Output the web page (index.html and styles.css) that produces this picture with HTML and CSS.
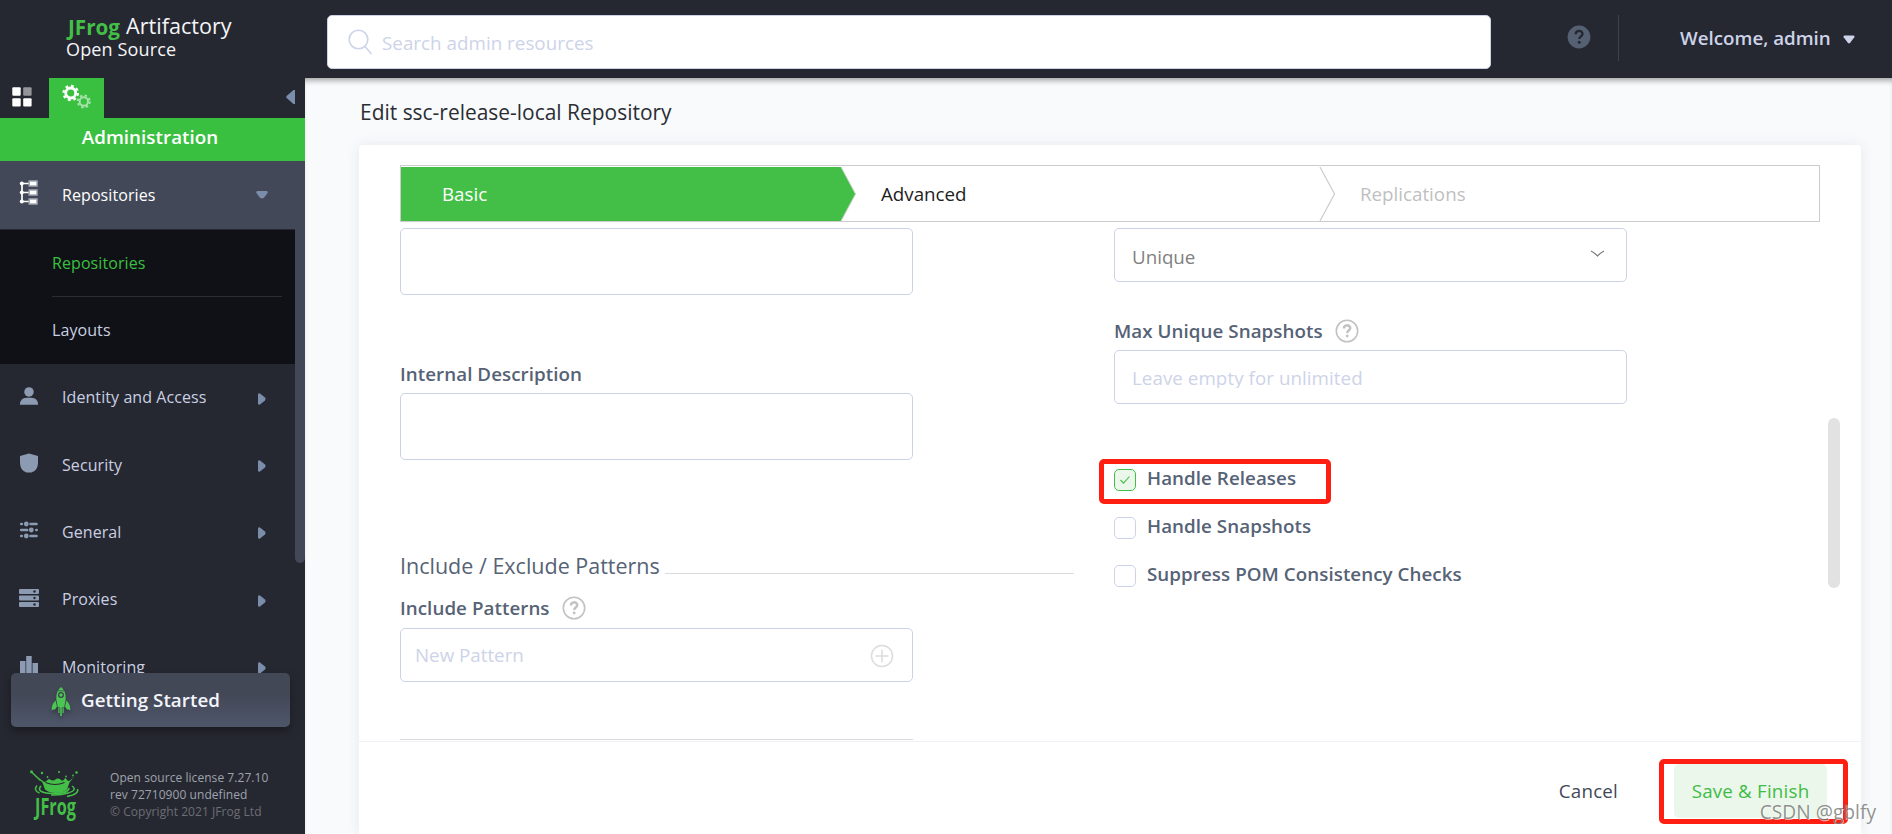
FILE: index.html
```html
<!DOCTYPE html>
<html lang="en">
<head>
    <meta charset="UTF-8">
    <meta name="viewport" content="width=device-width, initial-scale=1.0">
    <title>JFrog Artifactory</title>
    <link rel="stylesheet" href="styles.css">
</head>
<body>

    <header class="topbar">
        <div class="brand">
            <div class="brand-name">
                <svg width="54" height="26" viewBox="0 0 54 26"><text class="frog-text" x="0" y="21.5" font-size="22" textLength="52" lengthAdjust="spacingAndGlyphs">JFrog</text></svg>
                <span>Artifactory</span>
            </div>
            <div class="brand-edition">Open Source</div>
        </div>
        <div class="search">
            <svg width="26" height="26" viewBox="0 0 26 26" fill="none" stroke="#cdd3e8" stroke-width="1.6"><circle cx="10.5" cy="10.5" r="9.3"/><path d="M17 17.5l6.5 7.5"/></svg>
            <span>Search admin resources</span>
        </div>
        <svg class="top-help" width="24" height="24" viewBox="0 0 24 24"><circle cx="12" cy="12" r="11.4" fill="#556173"/><path d="M8.7 9.3c0-4.6 6.8-4.4 6.8-.4 0 2.5-3.2 2.5-3.2 5" fill="none" stroke="#262831" stroke-width="2.4"/><circle cx="12.2" cy="17.2" r="1.5" fill="#262831"/></svg>
        <div class="user">
            <span>Welcome, admin</span>
            <svg width="12" height="9" viewBox="0 0 12 9"><path d="M1.5.5h9q1.5.3.8 1.8L7.2 7.8q-1.2 1.2-2.4 0L.7 2.3Q0 .8 1.5.5z" fill="#cdd3e8"/></svg>
        </div>
    </header>

    <aside class="sidebar">
        <div class="modes">
            <div class="mode">
                <svg width="20" height="20" viewBox="0 0 20 20" fill="#fff"><rect x=".3" y=".3" width="8.4" height="8.4" rx="1"/><rect x="11.2" y=".3" width="8.4" height="8.4" rx="1" fill="#94959b"/><rect x=".3" y="11.2" width="8.4" height="8.4" rx="1"/><rect x="11.2" y="11.2" width="8.4" height="8.4" rx="1"/></svg>
            </div>
            <div class="mode active">
                <svg width="30" height="26" viewBox="0 0 30 26" fill="none">
                    <circle cx="8.7" cy="9" r="5" stroke="#fff" stroke-width="2.8"/>
                    <circle cx="8.7" cy="9" r="7.2" stroke="#fff" stroke-width="2.2" stroke-dasharray="2.83 2.83"/>
                    <g opacity=".55"><circle cx="21.8" cy="17.5" r="4.2" stroke="#fff" stroke-width="2"/>
                    <circle cx="21.8" cy="17.5" r="6" stroke="#fff" stroke-width="2" stroke-dasharray="2.36 2.36"/></g>
                </svg>
            </div>
            <svg class="collapse" width="9" height="14" viewBox="0 0 9 14"><path d="M9 0H7.5L.6 6q-.8 1 0 2l6.9 6H9z" fill="#7a8dab"/></svg>
        </div>
        <div class="mode-title">Administration</div>

        <nav class="menu">
            <div class="menu-item open">
                <svg class="menu-icon" width="20" height="26" viewBox="0 0 20 26"><path d="M3 3.5v19M3 3.5h8M3 12.5h8M3 21.5h8" stroke="#fff" stroke-width="1.7" fill="none"/><g fill="#fff"><circle cx="2.8" cy="3.5" r="2"/><circle cx="2.8" cy="12.5" r="2"/><circle cx="2.8" cy="21.5" r="2"/></g><g fill="#fff" stroke="#a3a8b3" stroke-width="1.5"><rect x="10.2" y="1" width="7.8" height="5"/><rect x="10.2" y="10" width="7.8" height="5"/><rect x="10.2" y="19" width="7.8" height="5"/></g></svg>
                <span>Repositories</span>
                <svg class="arrow" width="12" height="8" viewBox="0 0 12 8"><path d="M1.2 0h9.6q1.5.5.8 2L8 6.8q-2 1.6-4 0L.4 2Q-.3.5 1.2 0z" fill="#7a8dab"/></svg>
            </div>
            <div class="submenu">
                <div class="submenu-item selected">Repositories</div>
                <div class="submenu-item">Layouts</div>
            </div>
            <div class="menu-item">
                <svg class="menu-icon" width="22" height="22" viewBox="0 0 22 22" fill="#8c9bb2"><circle cx="11" cy="6.5" r="5.2"/><path d="M1 20.5q.5-7.5 7-7.5h6q6.5 0 7 7.5z"/></svg>
                <span>Identity and Access</span>
                <svg class="arrow" width="8" height="12" viewBox="0 0 8 12"><path d="M0 1.3Q.6-.3 2 .5l5 4q1.3 1.5 0 3l-5 4Q.6 12.3 0 10.7z" fill="#7a8dab"/></svg>
            </div>
            <div class="menu-item">
                <svg class="menu-icon" width="20" height="22" viewBox="0 0 20 22"><path d="M10 1.5l9 2.5v6.5q0 8-6.5 10h-5Q1 18.5 1 10.5V4z" fill="#8c9bb2"/></svg>
                <span>Security</span>
                <svg class="arrow" width="8" height="12" viewBox="0 0 8 12"><path d="M0 1.3Q.6-.3 2 .5l5 4q1.3 1.5 0 3l-5 4Q.6 12.3 0 10.7z" fill="#7a8dab"/></svg>
            </div>
            <div class="menu-item">
                <svg class="menu-icon" width="20" height="22" viewBox="0 0 20 22"><path d="M2.2 5h.6M11.5 5h6M2.2 11h6M17.3 11h.4M2.2 17h.6M11.5 17h6" stroke="#8c9bb2" stroke-width="2.6" stroke-linecap="round"/><g fill="#8c9bb2"><circle cx="7.3" cy="5" r="2.4"/><circle cx="12.3" cy="11" r="2.4"/><circle cx="7.3" cy="17" r="2.4"/></g></svg>
                <span>General</span>
                <svg class="arrow" width="8" height="12" viewBox="0 0 8 12"><path d="M0 1.3Q.6-.3 2 .5l5 4q1.3 1.5 0 3l-5 4Q.6 12.3 0 10.7z" fill="#7a8dab"/></svg>
            </div>
            <div class="menu-item">
                <svg class="menu-icon" width="20" height="22" viewBox="0 0 20 22"><g fill="#8c9bb2"><rect x="0" y="2" width="20" height="5" rx="1"/><rect x="0" y="8.5" width="20" height="5" rx="1"/><rect x="0" y="15" width="20" height="5" rx="1"/></g><g fill="#262831"><circle cx="15.5" cy="4.5" r="1.2"/><circle cx="15.5" cy="11" r="1.2"/><circle cx="15.5" cy="17.5" r="1.2"/></g></svg>
                <span>Proxies</span>
                <svg class="arrow" width="8" height="12" viewBox="0 0 8 12"><path d="M0 1.3Q.6-.3 2 .5l5 4q1.3 1.5 0 3l-5 4Q.6 12.3 0 10.7z" fill="#7a8dab"/></svg>
            </div>
            <div class="menu-item">
                <svg class="menu-icon" width="20" height="22" viewBox="0 0 20 22" fill="#8c9bb2"><rect x="1" y="7" width="5.5" height="15"/><rect x="7.2" y="2" width="5.5" height="20"/><rect x="13.5" y="9" width="5.5" height="13"/></svg>
                <span>Monitoring</span>
                <svg class="arrow" width="8" height="12" viewBox="0 0 8 12"><path d="M0 1.3Q.6-.3 2 .5l5 4q1.3 1.5 0 3l-5 4Q.6 12.3 0 10.7z" fill="#7a8dab"/></svg>
            </div>
            <div class="menu-scroll"></div>
        </nav>

        <div class="getting-started">
            <svg width="20" height="32" viewBox="0 0 20 32" fill="#4cc653"><path d="M10 1q2 1.5 3 3.5H7q1-2 3-3.5z"/><path fill-rule="evenodd" d="M6.5 5.3h7q1.5 4 1.2 8l-1.5 8.2H6.8L5.3 13.3q-.3-4 1.2-8zM10 6a3 3 0 1 0 0 6 3 3 0 0 0 0-6z"/><circle cx="10" cy="9" r="1.8"/><path d="M4.5 14.5l1.5 6-2 3q-2.5-.5-3.2 1-.8-5 3.7-10zM15.5 14.5l-1.5 6 2 3q2.5-.5 3.2 1 .8-5-3.7-10z"/><path d="M9.2 14h1.6v16H9.2zM7.3 22h1.2v5H7.3zM11.5 22h1.2v5h-1.2z"/></svg>
            <span>Getting Started</span>
        </div>

        <div class="license">
            <svg width="50" height="50" viewBox="0 0 50 50" fill="none" stroke="#43bf47">
                <g fill="#43bf47" stroke="none">
                    <path d="M4 5l9 6q2 2 4-.5 1.500-2.500 3-1 3 2 5.500 0t5.500.5q2 1.500 3-.5 1.500-2.500 3 .5 2 2 4-.5l3-3-4.500 6-2.500 7q-4 3.500-11 3.500t-11-3.500l-2.500-7z"/>
                    <circle cx="1.5" cy="1.8" r="1.5"/><circle cx="12" cy="3" r="1.2"/><circle cx="17.5" cy="7" r=".9"/><circle cx="29" cy="2" r="1"/><circle cx="46.5" cy="2.5" r="1.3"/><circle cx="36" cy="6.5" r=".9"/><circle cx="43" cy="5.5" r=".9"/>
                </g>
                <path d="M1.5 2l9 8.5" stroke-width="1.5"/>
                <path d="M15.5 12.5q9.5 4 19 0" stroke="#262831" stroke-width="1.2"/>
                <path d="M11 16q-6 6.500 11 7.500 16 .5 17-5.500" stroke-width="1.7"/>
                <path d="M7 15.500q-4 5 2.500 7.500M42 16q6 4-4 7-7 2.500-17 2M47.500 19q2 5-10.500 7.500" stroke-width="1.5"/>
                <text class="frog-text" x="5" y="44.5" font-size="23" stroke="none" textLength="41" lengthAdjust="spacingAndGlyphs">JFrog</text>
            </svg>
            <div class="license-text">
                <div>Open source license 7.27.10</div>
                <div>rev 72710900 undefined</div>
                <div class="copyright">© Copyright 2021 JFrog Ltd</div>
            </div>
        </div>
    </aside>

    <main class="content">
        <h1>Edit ssc-release-local Repository</h1>

        <div class="card">
            <div class="wizard">
                <div class="step current">Basic</div>
                <svg class="step-sep" width="17" height="55" viewBox="0 0 17 55"><path d="M0 1h2l14.500 27L2 55H0z" fill="#43bf47"/><path d="M2 1l14.500 27L2 55" fill="none" stroke="#c4cfc4"/></svg>
                <div class="step next">Advanced</div>
                <svg class="step-sep" width="17" height="55" viewBox="0 0 17 55"><path d="M1 1l14.500 27L1 55" fill="none" stroke="#ccc" stroke-width="1.2"/></svg>
                <div class="step disabled">Replications</div>
            </div>

            <div class="form">
                <div class="column">
                    <div class="field area"></div>
                    <div class="label internal"><span>Internal Description</span></div>
                    <div class="field area"></div>
                    <div class="section-title"><span>Include / Exclude Patterns</span></div>
                    <div class="label include"><span>Include Patterns</span>
                        <svg width="24" height="24" viewBox="0 0 24 24" fill="none" stroke="#c2c2c2"><circle cx="12" cy="12" r="10.7" stroke-width="1.6"/><path d="M8.9 9.5c0-4.2 6.3-4 6.3-.4 0 2.4-3 2.4-3 4.9" stroke-width="2.5"/><circle cx="12.2" cy="17" r=".8" stroke-width="1.3"/></svg>
                    </div>
                    <div class="field pattern">
                        <span>New Pattern</span>
                        <svg width="24" height="24" viewBox="0 0 24 24" fill="none" stroke="#dcdcdc" stroke-width="1.5"><circle cx="12" cy="12" r="10.5"/><path d="M12 5.500v13M5.500 12h13"/></svg>
                    </div>
                    <div class="list-top"></div>
                </div>

                <div class="column">
                    <div class="field select">
                        <span>Unique</span>
                        <svg width="15" height="8" viewBox="0 0 15 8"><path d="M1 1q3 1.500 6.500 5Q11 2.500 14 1" fill="none" stroke="#777" stroke-width="1.1"/></svg>
                    </div>
                    <div class="label max"><span>Max Unique Snapshots</span>
                        <svg width="24" height="24" viewBox="0 0 24 24" fill="none" stroke="#c2c2c2"><circle cx="12" cy="12" r="10.7" stroke-width="1.6"/><path d="M8.9 9.5c0-4.2 6.3-4 6.3-.4 0 2.4-3 2.4-3 4.9" stroke-width="2.5"/><circle cx="12.2" cy="17" r=".8" stroke-width="1.3"/></svg>
                    </div>
                    <div class="field number"><span>Leave empty for unlimited</span></div>
                    <div class="checks">
                        <div class="check">
                            <span class="box checked"><svg width="12" height="10" viewBox="0 0 12 10"><path d="M1.5 5l3 3.200L10.500 1.500" fill="none" stroke="#43bf47" stroke-width="1.1"/></svg></span>
                            <span class="check-label">Handle Releases</span>
                            <div class="marker marker-check"></div>
                        </div>
                        <div class="check"><span class="box"></span><span class="check-label">Handle Snapshots</span></div>
                        <div class="check"><span class="box"></span><span class="check-label">Suppress POM Consistency Checks</span></div>
                    </div>
                </div>
                <div class="form-scroll"></div>
            </div>

            <div class="actions">
                <span class="cancel">Cancel</span>
                <div class="save">Save &amp; Finish
                    <div class="marker marker-save"></div>
                </div>
            </div>
        </div>
    </main>

    <div class="watermark">CSDN @gblfy</div>

</body>
</html>
```

FILE: styles.css
```css
:root {
    --dark: #262831;
    --slate: #424857;
    --green: #43bf47;
    --border: #cbd2e6;
    --label: #566275;
    --placeholder: #cdd3e8;
    --red: #ff1f12;
}

* {
    margin: 0;
    padding: 0;
    box-sizing: border-box;
}

body {
    position: relative;
    display: grid;
    grid-template: 78px 756px / 305px 1fr;
    width: 1892px;
    height: 834px;
    overflow: hidden;
    font-family: "Open Sans", "Noto Sans", sans-serif;
    font-size: 18.75px;
    background: #f8fafc;
}

svg {
    display: block;
    flex-shrink: 0;
    overflow: visible;
}

/* Top bar */
.topbar {
    grid-column: 1 / 3;
    display: flex;
    align-items: flex-start;
    background: var(--dark);
    color: #f4f5f8;
}

.brand {
    width: 327px;
    padding: 13px 0 0 66px;
}

.brand-name {
    display: flex;
    gap: 4px;
    height: 26px;
    padding-left: 2px;
    font-size: 21.6px;
    line-height: 26px;
}

.brand-edition {
    font-size: 18px;
    letter-spacing: 0.15px;
    line-height: 20px;
}

.frog-text {
    fill: var(--green);
    font-family: "Open Sans", sans-serif;
    font-weight: 700;
}

.search {
    display: flex;
    gap: 8px;
    width: 1164px;
    height: 54px;
    margin-top: 15px;
    padding: 13px 20px;
    border: 1px solid var(--border);
    border-radius: 5px;
    background: #fff;
    color: var(--placeholder);
    letter-spacing: 0.04px;
    line-height: 27px;
}

.top-help {
    margin: 25px 0 0 76px;
}

.user {
    display: flex;
    align-items: center;
    gap: 12px;
    height: 46px;
    margin: 15px 0 0 27px;
    padding: 0 0 0 61px;
    border-left: 1px solid #3d414d;
    color: var(--placeholder);
    font-weight: 600;
}

.user span {
    margin-top: -2px;
}

.user svg {
    margin-top: 3px;
}

/* Sidebar */
.sidebar {
    display: flex;
    flex-direction: column;
    background: var(--dark);
}

.modes {
    display: flex;
    height: 40px;
}

.mode {
    width: 49px;
    padding: 9px 0 0 12px;
}

.mode.active {
    width: 55px;
    padding: 6px 0 0 13px;
    background: #3ac040;
}

.collapse {
    margin: 12px 10px 0 auto;
}

.mode-title {
    height: 43px;
    padding-right: 5px;
    background: #3ac040;
    color: #fff;
    font-weight: 600;
    letter-spacing: 0.05px;
    line-height: 37px;
    text-align: center;
}

.menu {
    position: relative;
    height: 512px;
    overflow: hidden;
    color: #c9cfe2;
    font-size: 16px;
    letter-spacing: 0.08px;
}

.menu-item {
    display: flex;
    align-items: center;
    height: 67.4px;
    padding: 0 29px 0 19px;
}

.menu-item .menu-icon {
    width: 20px;
    margin: -4px 23px 0 0;
}

.menu-item span {
    margin-top: -1px;
}

.menu-item .arrow {
    margin: 2px 10px 0 auto;
}

.menu-item.open {
    height: 68px;
    padding-right: 27px;
    background: var(--slate);
    color: #fff;
}

.menu-item.open span {
    margin-top: 0;
}

.menu-item.open .arrow {
    margin: 0 10px 0 auto;
}

.submenu {
    height: 135px;
    margin-right: 10px;
    padding: 0 13px 0 52px;
    border-top: 1px solid var(--dark);
    background: #101116;
}

.submenu-item {
    height: 67px;
    line-height: 67px;
}

.submenu-item.selected {
    border-bottom: 1px solid #2b2d36;
    color: #3ac040;
}

.menu-scroll {
    position: absolute;
    top: 0;
    right: 0;
    width: 10px;
    height: 402px;
    border-radius: 5px;
    background: var(--slate);
}

.getting-started {
    display: flex;
    align-items: center;
    gap: 10px;
    width: 279px;
    height: 54px;
    margin-left: 11px;
    padding-left: 40px;
    border-radius: 5px;
    background: linear-gradient(#434857 40%, #4e566a);
    box-shadow: 0 4px 8px rgba(0, 0, 0, 0.35);
    color: #f3f5fb;
    font-weight: 600;
    letter-spacing: 0.05px;
}

.getting-started span {
    margin-top: -2px;
}

.getting-started svg {
    margin-top: 4px;
    filter: drop-shadow(0 3px 2px rgba(0, 0, 0, 0.3));
}

.license {
    display: flex;
    gap: 30px;
    margin-top: 43px;
    padding-left: 30px;
}

.license-text {
    margin-top: -1px;
    color: #9fa3ad;
    font-size: 12px;
    letter-spacing: 0.06px;
    line-height: 17px;
    white-space: nowrap;
}

.copyright {
    color: #6c6e75;
}

/* Content */
.content {
    padding: 0 31px 0 54px;
    box-shadow: inset 0 6px 6px -4px rgba(0, 0, 0, 0.4);
}

h1 {
    height: 67px;
    padding-left: 1px;
    color: #2b2d33;
    font-size: 20.95px;
    font-weight: 400;
    line-height: 69px;
}

.card {
    height: 689px;
    padding-top: 20px;
    border-radius: 4px 4px 0 0;
    background: #fff;
    box-shadow: 0 0 14px rgba(60, 70, 80, 0.09);
}

.wizard {
    display: flex;
    width: 1420px;
    height: 57px;
    margin-left: 41px;
    border: 1px solid #ccc;
    line-height: 56px;
}

.step.current {
    width: 438px;
    margin-top: 1px;
    padding-left: 41px;
    background: var(--green);
    color: #fff;
    font-weight: 500;
    line-height: 54px;
}

.step.next {
    width: 463px;
    padding-left: 25px;
    color: #222;
}

.step.disabled {
    padding-left: 24px;
    color: #bfbfbf;
}

.form {
    display: flex;
    position: relative;
    gap: 40px;
    height: 519px;
    padding: 6px 0 0 41px;
    overflow: hidden;
}

.column {
    width: 674px;
}

.field {
    display: flex;
    width: 513px;
    height: 54px;
    border: 1px solid var(--border);
    border-radius: 5px;
    color: var(--placeholder);
}

.field.area {
    height: 67px;
}

.label {
    display: flex;
    align-items: center;
    gap: 12px;
    height: 26px;
    color: var(--label);
    font-weight: 600;
    letter-spacing: 0.06px;
}

.label span {
    margin-top: -2px;
}

.label.internal {
    margin: 66px 0 6px;
}

.label.include {
    margin: 15px 0 7px;
}

.label.max {
    margin: 36px 0 6px;
}

.section-title {
    display: flex;
    gap: 5px;
    height: 30px;
    margin-top: 90px;
    color: var(--label);
    font-size: 21.5px;
    line-height: 32px;
}

.section-title::after {
    content: "";
    flex: 1;
    height: 23px;
    border-bottom: 1px solid #dcdcdc;
}

.field.pattern {
    justify-content: space-between;
    align-items: center;
    padding: 0 18px 0 14px;
}

.field.pattern span {
    margin-top: -2px;
}

.field.pattern svg {
    margin-top: 2px;
}

.list-top {
    width: 513px;
    height: 1px;
    margin-top: 57px;
    background: #dcdcdc;
}

.field.select {
    justify-content: space-between;
    padding: 0 21px 0 17px;
    color: #808080;
    line-height: 55px;
}

.field.select svg {
    margin-top: 21px;
}

/* the input is shorter than its line, so the descenders are cut */
.field.number span {
    height: 22px;
    margin: 15px 0 0 17px;
    overflow: hidden;
    letter-spacing: 0.06px;
    line-height: 24px;
}

.checks {
    display: flex;
    flex-direction: column;
    gap: 26px;
    margin-top: 65px;
}

.check {
    display: flex;
    position: relative;
    gap: 11px;
    height: 22px;
    color: var(--label);
    font-weight: 600;
    letter-spacing: 0.06px;
    line-height: 18px;
}

.box {
    display: flex;
    align-items: center;
    justify-content: center;
    width: 22px;
    height: 22px;
    border: 1px solid var(--border);
    border-radius: 5px;
}

.box.checked {
    border-color: var(--green);
    background: #ebf7eb;
}

.form-scroll {
    position: absolute;
    top: 196px;
    right: 21px;
    width: 12px;
    height: 170px;
    border-radius: 6px;
    background: #e2e2e2;
}

.actions {
    display: flex;
    justify-content: flex-end;
    height: 93px;
    padding: 22px 34px 0 0;
    border-top: 1px solid #eff1f6;
    line-height: 53px;
}

.cancel {
    margin-right: 56px;
    color: #414857;
    font-weight: 500;
    letter-spacing: 0.2px;
}

.save {
    position: relative;
    width: 153px;
    height: 54px;
    border-radius: 5px;
    background: #ebf7eb;
    color: #3fbc45;
    font-weight: 500;
    letter-spacing: 0.2px;
    text-align: center;
}

/* Red annotation frames */
.marker {
    position: absolute;
    border: 5px solid var(--red);
    border-radius: 5px;
}

.marker-check {
    top: -10px;
    left: -15px;
    width: 232px;
    height: 45px;
}

.marker-save {
    top: -5px;
    left: -15px;
    width: 189px;
    height: 65px;
}

.watermark {
    position: absolute;
    right: 16px;
    bottom: 8px;
    color: rgba(110, 110, 110, 0.75);
    font-size: 19.2px;
    line-height: 28px;
    text-shadow: 1px 1px 0 rgba(255, 255, 255, 0.6);
}
```
